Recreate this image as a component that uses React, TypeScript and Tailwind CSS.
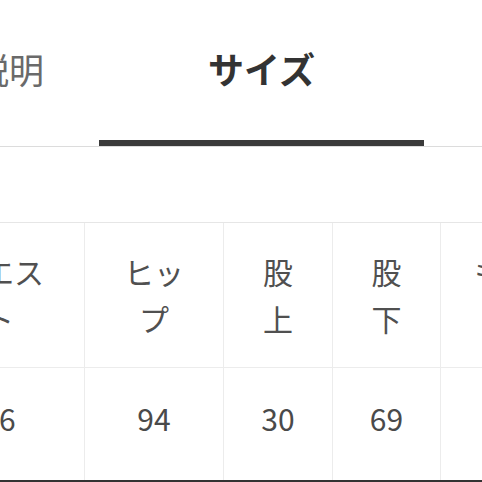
const columns = [
  { lines: ["ウエス", "ト"], value: "66", width: "w-[170px]" },
  { lines: ["ヒッ", "プ"], value: "94", width: "w-[139px]" },
  { lines: ["股", "上"], value: "30", width: "w-[109px]" },
  { lines: ["股", "下"], value: "69", width: "w-[108px]" },
  { lines: ["もも", "幅"], value: "58", width: "w-[128px]" },
];

export default function App() {
  return (
    <div
      className="h-[482px] w-[482px] overflow-hidden bg-white"
      style={{ fontFamily: '"Noto Sans CJK JP", "Noto Sans", sans-serif' }}
    >
      {/* tabs */}
      <div className="flex h-[147px] border-b border-[#dcdcdc]">
        <div className="ml-[-151px] flex h-full w-[250px] shrink-0 items-center justify-center pb-[8px] text-[35px] text-[#6a6a6a]">
          商品説明
        </div>
        <div className="flex h-full w-[325px] shrink-0 items-center justify-center border-b-[6px] border-[#3a3a3a] pb-[4px] text-[36px] font-bold text-[#333]">
          サイズ
        </div>
      </div>

      <div className="h-[75px]" />

      {/* size table */}
      <div className="ml-[-86px] flex border-t border-[#e6e6e6]">
        {columns.map((c, i) => (
          <div key={i} className={`${c.width} shrink-0 ${i > 0 ? "border-l border-[#ececec]" : ""}`}>
            <div className="flex h-[144px] flex-col items-center justify-center text-[30px] leading-[47px] text-[#505050]">
              {c.lines.map((l) => (
                <span key={l}>{l}</span>
              ))}
            </div>
            <div className="flex h-[113px] items-center justify-center border-t border-[#ececec] pb-[12px] text-[30px] text-[#4a4a4a]">
              {c.value}
            </div>
          </div>
        ))}
      </div>
      <div className="h-[2px] bg-[#333]" />
    </div>
  );
}
